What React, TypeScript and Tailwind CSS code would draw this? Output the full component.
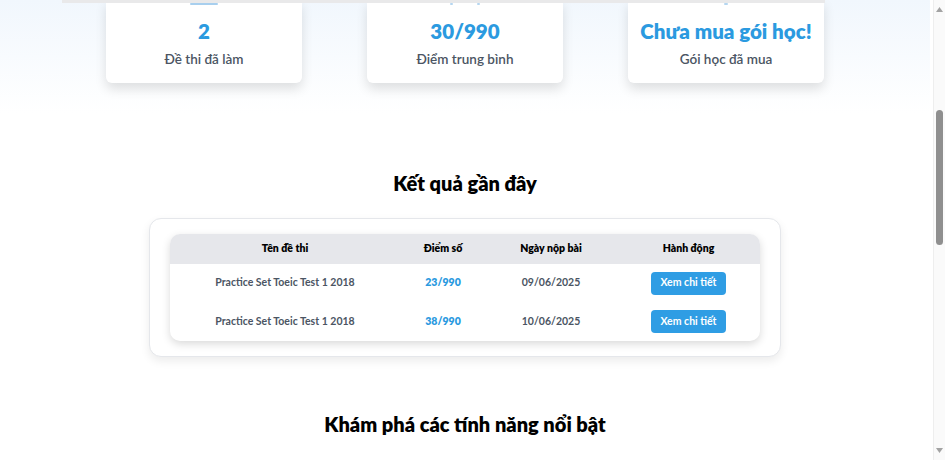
import React from "react";

const font = { fontFamily: 'Lato, "Open Sans", sans-serif' };

function StatCard({ value, label, deco }: { value: string; label: string; deco: React.ReactNode }) {
  return (
    <div className="w-[196px] h-[83px] bg-white rounded-b-[6px] shadow-[0_6px_12px_rgba(0,0,0,0.12)] flex flex-col items-center">
      <div className="h-[15px] w-full flex justify-center items-start">{deco}</div>
      <div className="h-[32px] flex items-center text-[20.5px] font-extrabold text-[#2b9ae0]">{value}</div>
      <div className="h-[24px] flex items-center text-[13.5px] font-semibold text-[#4b5563]">{label}</div>
    </div>
  );
}

const rows = [
  { name: "Practice Set Toeic Test 1 2018", score: "23/990", date: "09/06/2025" },
  { name: "Practice Set Toeic Test 1 2018", score: "38/990", date: "10/06/2025" },
];

export default function App() {
  return (
    <div className="w-[945px] h-[460px] overflow-hidden flex bg-white" style={font}>
      <div className="w-[933px] h-[460px] flex flex-col relative pr-[3px]">
        <div className="bg-gradient-to-b from-[#f1f7fd] to-white h-[113px] flex items-start justify-center gap-[65px]">
          <StatCard
            value="2"
            label="Đề thi đã làm"
            deco={<div className="mt-[3px] w-[28px] h-[2px] rounded bg-[#a8cfee]" />}
          />
          <StatCard
            value="30/990"
            label="Điểm trung bình"
            deco={
              <div className="mt-[3px] w-[30px] flex justify-between">
                <div className="w-[3px] h-[2px] rounded bg-[#b5d6f0]" />
                <div className="w-[3px] h-[2px] rounded bg-[#b5d6f0]" />
              </div>
            }
          />
          <StatCard
            value="Chưa mua gói học!"
            label="Gói học đã mua"
            deco={<div className="mt-[3px] w-[4px] h-[2px] rounded bg-[#b5d6f0]" />}
          />
        </div>
        <div className="absolute top-0 left-[62px] w-[763px] h-[3px] bg-[#e9e9ea]" />
        <h2 className="mt-[56px] text-center text-[20px] leading-[28px] font-extrabold text-black">Kết quả gần đây</h2>
        <div className="mt-[21px] mx-auto w-[632px] rounded-[12px] border border-[#e5e7eb] bg-white shadow-[0_4px_10px_rgba(0,0,0,0.08)] px-[20px] pt-[15px] pb-[15px]">
          <div className="rounded-[10px] overflow-hidden bg-white shadow-[0_3px_8px_rgba(0,0,0,0.15)]">
            <div className="grid grid-cols-[230px_86px_130px_145px] bg-[#e6e7eb] h-[30px] items-center text-[10.5px] font-extrabold text-black">
              <div className="text-center">Tên đề thi</div>
              <div className="text-center">Điểm số</div>
              <div className="text-center">Ngày nộp bài</div>
              <div className="text-center">Hành động</div>
            </div>
            {rows.map((r, i) => (
              <div key={i} className="grid grid-cols-[230px_86px_130px_145px] h-[38.5px] items-center text-[10.5px] font-bold text-[#4b5563]">
                <div className="text-center">{r.name}</div>
                <div className="text-center text-[#2b9ae0] font-extrabold">{r.score}</div>
                <div className="text-center">{r.date}</div>
                <div className="flex justify-center">
                  <button className="w-[75px] h-[23px] rounded-[4px] bg-[#2f9de4] text-white text-[10.5px] font-bold">Xem chi tiết</button>
                </div>
              </div>
            ))}
          </div>
        </div>
        <h2 className="mt-[53px] text-center text-[20px] leading-[28px] font-extrabold text-black">Khám phá các tính năng nổi bật</h2>
      </div>
      <div className="w-[12px] h-[460px] bg-[#fafafa] border-l border-[#eeeeee] flex flex-col items-center justify-between py-[7px] relative">
        <svg width="7" height="5" viewBox="0 0 7 5"><path d="M3.5 0L7 5H0z" fill="#a3a3a3" /></svg>
        <div className="absolute left-[2px] top-[110px] w-[7px] h-[135px] rounded-[4px] bg-[#8f8f8f]" />
        <svg width="7" height="5" viewBox="0 0 7 5"><path d="M0 0H7L3.5 5z" fill="#a3a3a3" /></svg>
      </div>
    </div>
  );
}
